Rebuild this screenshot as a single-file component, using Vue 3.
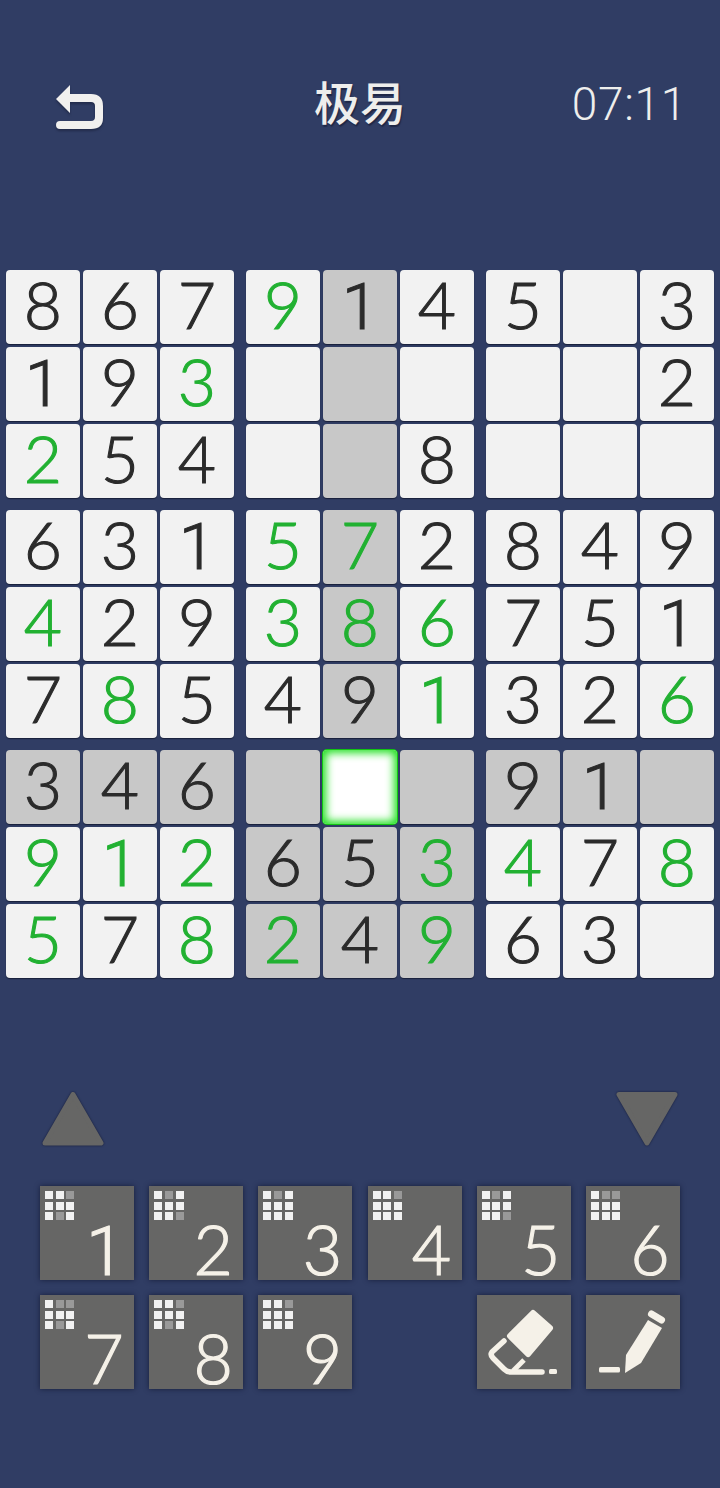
<script setup>
const board = [
  '867914503', '193000002', '254008000',
  '631572849', '429386751', '785491326',
  '346000910', '912653478', '578249630'
]
// 绿色 = 玩家填入的数字 (row-col)
const green = new Set(['0-3','1-2','2-0','3-3','3-4','4-0','4-3','4-4','4-5','5-1','5-5','5-8','7-0','7-1','7-2','7-5','7-6','7-8','8-0','8-2','8-3','8-5'])
const selRow = 6
const selCol = 4

const blocks = []
for (let br = 0; br < 3; br++) {
  for (let bc = 0; bc < 3; bc++) {
    const cells = []
    for (let r = br * 3; r < br * 3 + 3; r++) {
      for (let c = bc * 3; c < bc * 3 + 3; c++) {
        const v = board[r][c]
        const selected = r === selRow && c === selCol
        const sameBlock = Math.floor(r / 3) === 2 && Math.floor(c / 3) === 1
        cells.push({
          key: r + '-' + c,
          value: v === '0' ? '' : v,
          green: green.has(r + '-' + c),
          selected,
          hl: !selected && (r === selRow || c === selCol || sameBlock)
        })
      }
    }
    blocks.push(cells)
  }
}

// 小九宫格里灰掉的格子
const keys = [
  { n: 1, dim: [2, 7] },
  { n: 2, dim: [1, 8] },
  { n: 3, dim: [1] },
  { n: 4, dim: [2] },
  { n: 5, dim: [1, 8] },
  { n: 6, dim: [1, 2] },
  { n: 7, dim: [1, 2, 7] },
  { n: 8, dim: [2, 7] },
  { n: 9, dim: [2] }
]
</script>

<template>
  <div class="page">
    <header class="top">
      <svg class="back" viewBox="0 0 50 46" width="50" height="46">
        <path d="M1 15 L15 1 V10 H36 Q48 10 48 22 V34 Q48 45 36 45 H5 Q1 45 1 41 Q1 37 5 37 H36 Q40 37 40 33 V22 Q40 18 36 18 H15 V29 Z" fill="#f1f0ee" />
      </svg>
      <div class="title">极易</div>
      <div class="time">07:11</div>
    </header>

    <section class="board">
      <div v-for="(cells, i) in blocks" :key="i" class="block">
        <div
          v-for="cell in cells"
          :key="cell.key"
          class="cell"
          :class="{ hl: cell.hl, sel: cell.selected, green: cell.green, one: cell.value === '1' }"
        >{{ cell.value }}</div>
      </div>
    </section>

    <div class="arrows">
      <svg class="arrow" viewBox="0 0 64 56" width="64" height="56">
        <path d="M32 3.5 L60 52 H4 Z" fill="#666665" stroke="#666665" stroke-width="5" stroke-linejoin="round" />
      </svg>
      <svg class="arrow" viewBox="0 0 64 56" width="64" height="56">
        <path d="M4 3.5 H60 L32 52 Z" fill="#666665" stroke="#666665" stroke-width="5" stroke-linejoin="round" />
      </svg>
    </div>

    <section class="pad">
      <div v-for="k in keys" :key="k.n" class="key">
        <div class="mini">
          <i v-for="m in 9" :key="m" :class="{ dim: k.dim.includes(m - 1) }"></i>
        </div>
        <span class="num" :class="{ one: k.n === 1 }">{{ k.n }}</span>
      </div>
      <div class="key tool erase">
        <svg viewBox="0 0 94 94" width="94" height="94">
          <path d="M56 18 L73 33 L51 59 L33 41 Z" fill="#f5f1e8" stroke="#f5f1e8" stroke-width="6" stroke-linejoin="round" />
          <path d="M27 46 L15 57 Q13 60 16 63 L27 74 Q30 77 34 77 H65" fill="none" stroke="#f5f1e8" stroke-width="5.5" stroke-linecap="round" stroke-linejoin="round" />
          <path d="M47 65 L36 76" fill="none" stroke="#f5f1e8" stroke-width="5" />
          <rect x="72" y="74" width="8" height="5" rx="1.5" fill="#f5f1e8" />
        </svg>
      </div>
      <div class="key tool pen">
        <svg viewBox="0 0 94 94" width="94" height="94">
          <path d="M62 25 L76 33 L55 68 L39 78 L40 60 Z" fill="#f5f1e8" />
          <path d="M65.5 19 L75.5 25" stroke="#f5f1e8" stroke-width="7" stroke-linecap="round" />
          <rect x="13" y="72" width="21" height="5.5" rx="1.5" fill="#f5f1e8" />
        </svg>
      </div>
    </section>
  </div>
</template>

<style scoped>
.page {
  width: 720px;
  height: 1488px;
  background: #303d64;
  overflow: hidden;
  font-family: "Lato", "Noto Sans CJK SC", sans-serif;
}

.top {
  height: 270px;
  box-sizing: border-box;
  padding: 84px 33px 0 55px;
  display: flex;
  justify-content: space-between;
  align-items: flex-start;
  position: relative;
}

.back {
  filter: drop-shadow(0 2px 1px rgba(20, 25, 50, 0.5));
}

.title {
  position: absolute;
  left: 0;
  right: 0;
  top: 76px;
  text-align: center;
  color: #eeeeec;
  font-size: 46px;
  line-height: 54px;
  font-weight: 500;
  text-shadow: 1px 2px 1px rgba(20, 25, 50, 0.6);
}

.time {
  margin-top: -1px;
  color: #eeeeec;
  font-family: "Roboto", sans-serif;
  font-size: 46px;
  line-height: 42px;
  letter-spacing: 0.7px;
  font-weight: 300;
}

.board {
  display: grid;
  grid-template-columns: repeat(3, 230px);
  grid-template-rows: repeat(3, 230px);
  gap: 10px;
  padding-left: 6px;
}

.block {
  display: grid;
  grid-template-columns: repeat(3, 74px);
  grid-template-rows: repeat(3, 74px);
  gap: 3px;
}

.cell {
  box-sizing: border-box;
  padding-bottom: 6px;
  background: #f2f2f2;
  border-radius: 4px;
  color: #2b2b2b;
  font-size: 66px;
  line-height: 66px;
  font-weight: 300;
  -webkit-text-stroke: 1.1px currentColor;
  display: flex;
  align-items: center;
  justify-content: center;
  box-shadow: 0 1px 1px rgba(15, 20, 40, 0.7);
}

.cell.one {
  padding-bottom: 0;
  font-family: "Roboto", sans-serif;
  font-size: 65px;
}

.cell.green {
  color: #22b132;
}

.cell.hl {
  background: #c8c8c8;
}

.cell.sel {
  background: #fff;
  box-shadow: inset 0 0 8px 3px #1fe01f, 0 0 0 1px #12c412;
}

.arrows {
  margin-top: 111px;
  padding: 0 41px;
  display: flex;
  justify-content: space-between;
  height: 56px;
}

.arrow {
  filter: drop-shadow(0 0 1px rgba(15, 20, 45, 0.8));
}

.pad {
  margin-top: 39px;
  margin-left: 40px;
  display: grid;
  grid-template-columns: repeat(6, 94px);
  grid-auto-rows: 94px;
  gap: 15px 15.2px;
}

.key {
  position: relative;
  background: #666665;
  box-shadow: 0 0 5px rgba(15, 20, 45, 0.75);
}

.tool.erase {
  grid-column: 5;
}

.tool svg {
  display: block;
}

.mini {
  position: absolute;
  left: 5px;
  top: 5px;
  display: grid;
  grid-template-columns: repeat(3, 8px);
  grid-auto-rows: 8px;
  gap: 2.7px;
}

.mini i {
  background: #f2f2f2;
}

.mini i.dim {
  background: #999;
}

.num {
  position: absolute;
  right: 10px;
  top: 23px;
  width: 40px;
  text-align: center;
  font-size: 68px;
  line-height: 80px;
  font-weight: 300;
  -webkit-text-stroke: 1.2px currentColor;
  color: #f5f1e8;
}

.num.one {
  font-family: "Roboto", sans-serif;
  right: 9px;
  top: 26px;
}
</style>

<style>
html, body {
  margin: 0;
  background: #303d64;
}
</style>
